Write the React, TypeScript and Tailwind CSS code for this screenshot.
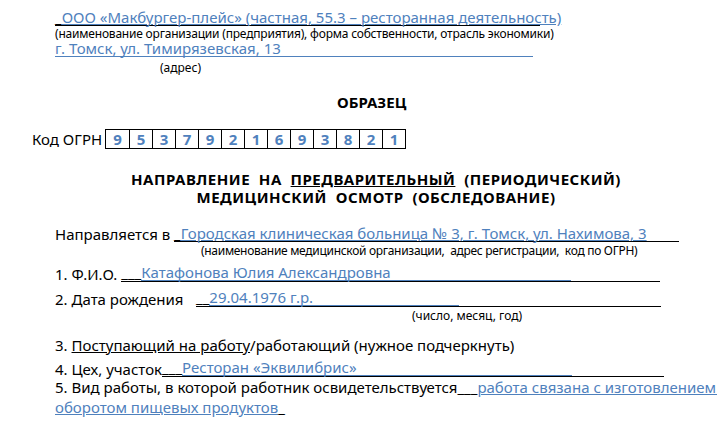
export default function App() {
  const blue = "text-[#4f81bd]";
  const digits = ["9", "5", "3", "7", "9", "2", "1", "6", "9", "3", "8", "2", "1"];
  return (
    <div className="w-[717px] h-[422px] bg-white text-black text-[15px] leading-none overflow-hidden font-['Liberation_Serif','DejaVu_Serif','Times_New_Roman',serif]">
      <div className="pl-[55px] pt-[10px]">
        <div className="h-[16px] flex items-end">
          <span className="border-b border-black w-[485px] whitespace-nowrap">
            _<span className={`${blue} underline decoration-[#4f81bd]`}>ООО «Макбургер-плейс» (частная, 55.3 – ресторанная деятельность)</span>
          </span>
        </div>
        <div className="h-[16px] flex items-center text-[12px] tracking-[-0.2px]">
          (наименование организации (предприятия), форма собственности, отрасль экономики)
        </div>
        <div className="h-[15px] flex items-end">
          <span className={`w-[478px] border-b border-[#4f81bd] ${blue}`}>г. Томск, ул. Тимирязевская, 13</span>
        </div>
        <div className="h-[22px] flex items-center pl-[105px] text-[12px]">(адрес)</div>
      </div>
      <div className="h-[24px] mt-[11px] flex items-center pl-[337px] font-bold">ОБРАЗЕЦ</div>
      <div className="mt-[15px] flex items-center pl-[32px] h-[20px]">
        <span className="w-[73px]">Код ОГРН</span>
        <div className="flex border border-black">
          {digits.map((d, i) => (
            <span
              key={i}
              className={`w-[23px] h-[18px] flex items-center justify-center font-bold ${blue} ${i ? "border-l border-black" : ""}`}
            >
              {d}
            </span>
          ))}
        </div>
      </div>
      <div className="mt-[21px] text-center font-bold leading-[18px] w-[752px] tracking-[0.5px]">
        <div>
          НАПРАВЛЕНИЕ&nbsp; НА&nbsp; <span className="underline">ПРЕДВАРИТЕЛЬНЫЙ</span>&nbsp; (ПЕРИОДИЧЕСКИЙ)
        </div>
        <div>МЕДИЦИНСКИЙ&nbsp; ОСМОТР&nbsp; (ОБСЛЕДОВАНИЕ)</div>
      </div>
      <div className="pl-[55px] mt-[20px]">
        <div className="h-[16px] flex items-end whitespace-nowrap">
          Направляется в&nbsp;
          <span className="border-b border-black w-[505px]">
            _<span className={`${blue} underline decoration-[#4f81bd]`}>Городская клиническая больница № 3, г. Томск, ул. Нахимова, 3</span>
          </span>
        </div>
        <div className="h-[18px] flex items-center pl-[146px] text-[12px] tracking-[-0.3px]">
          (наименование медицинской организации,&nbsp; адрес регистрации,&nbsp; код по ОГРН)
        </div>
        <div className="h-[22px] flex items-end whitespace-nowrap">
          1. Ф.И.О.&nbsp;
          <span className="border-b border-black w-[539px]">
            ___<span className={`${blue} inline-block w-[430px] border-b border-[#4f81bd]`}>Катафонова Юлия Александровна</span>
          </span>
        </div>
        <div className="h-[25px] flex items-end whitespace-nowrap">
          <span className="w-[141px]">2. Дата рождения</span>
          <span className="border-b border-black w-[465px]">
            __<span className={`${blue} inline-block w-[250px] border-b border-[#4f81bd]`}>29.04.1976 г.р.</span>
          </span>
        </div>
        <div className="h-[18px] flex items-center pl-[357px] text-[12px]">(число, месяц, год)</div>
        <div className="h-[28px] flex items-end">
          3.&nbsp;<span className="underline">Поступающий на работу</span>/работающий (нужное подчеркнуть)
        </div>
        <div className="h-[24px] flex items-end whitespace-nowrap">
          4. Цех, участок
          <span className="border-b border-black w-[502px]">
            ___<span className={`${blue} inline-block w-[390px] border-b border-[#4f81bd]`}>Ресторан «Эквилибрис»</span>
          </span>
        </div>
        <div className="h-[18px] flex items-end whitespace-nowrap">
          5. Вид работы, в которой работник освидетельствуется___
          <span className={`${blue} underline decoration-[#4f81bd]`}>работа связана с изготовлением и</span>
        </div>
        <div className="h-[20px] flex items-end whitespace-nowrap">
          <span className={`${blue} underline decoration-[#4f81bd]`}>оборотом пищевых продуктов</span>_
        </div>
      </div>
    </div>
  );
}
